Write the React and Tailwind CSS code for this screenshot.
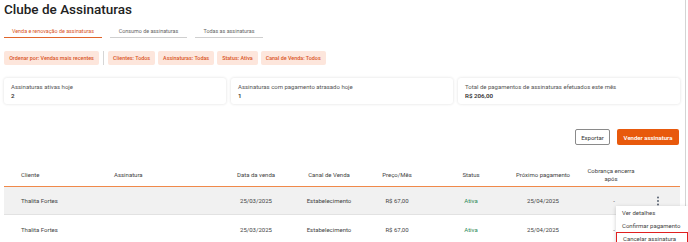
import { useState } from "react";

const filters = [
  "Clientes: Todos",
  "Assinaturas: Todas",
  "Status: Ativa",
  "Canal de Venda: Todos",
];

const cards = [
  { label: "Assinaturas ativas hoje", value: "2" },
  { label: "Assinaturas com pagamento atrasado hoje", value: "1" },
  { label: "Total de pagamentos de assinaturas efetuados este mês", value: "R$ 206,00" },
];

const rows = [
  { cliente: "Thalita Fortes", data: "25/03/2025", canal: "Estabelecimento", preco: "R$ 67,00", status: "Ativa", proximo: "25/04/2025", fim: "-" },
  { cliente: "Thalita Fortes", data: "25/03/2025", canal: "Estabelecimento", preco: "R$ 67,00", status: "Ativa", proximo: "25/04/2025", fim: "-" },
];

const Kebab = () => (
  <svg width="4" height="10" viewBox="0 0 4 10" className="text-gray-600">
    <circle cx="2" cy="1.5" r="0.9" fill="currentColor" />
    <circle cx="2" cy="5" r="0.9" fill="currentColor" />
    <circle cx="2" cy="8.5" r="0.9" fill="currentColor" />
  </svg>
);

const App = () => {
  const [tab] = useState(0);
  const tabs = [
    { label: "Venda e renovação de assinaturas", w: "w-[98px]" },
    { label: "Consumo de assinaturas", w: "w-[77px]" },
    { label: "Todas as assinaturas", w: "w-[68px]" },
  ];

  return (
    <div className="relative w-[688px] h-[242px] overflow-hidden bg-white font-['Roboto',sans-serif]">
      <div className="w-[686px] h-[242px] border-r border-[#d4d4d4] pl-[4px] pr-[5px]">
        {/* Title */}
        <h1 className="text-[13.5px] leading-[18px] font-medium text-[#222]">
          Clube de Assinaturas
        </h1>

        {/* Tabs */}
        <div className="flex gap-[8px] mt-[7px]">
          {tabs.map((t, i) => (
            <div
              key={t.label}
              className={`${t.w} h-[13px] pt-[3px] flex items-start justify-center text-[5.4px] leading-[7px] whitespace-nowrap ${
                i === tab
                  ? "text-[#d9541e] border-b-[1.5px] border-[#e0652b]"
                  : "text-[#666] border-b border-[#cfcfcf]"
              }`}
            >
              {t.label}
            </div>
          ))}
        </div>

        {/* Filter chips */}
        <div className="flex items-center mt-[13px] h-[14px]">
          <div className="w-[95px] h-[14px] flex items-center justify-center rounded-[2px] bg-[#fde6dc] text-[#d9541e] text-[5.4px] font-medium whitespace-nowrap">
            Ordenar por: Vendas mais recentes
          </div>
          <div className="w-px h-[14px] bg-[#d6d6d6] ml-[4px] mr-[4px]" />
          <div className="flex gap-[3px]">
            {filters.map((f) => (
              <div
                key={f}
                className="h-[14px] px-[5px] flex items-center rounded-[2px] bg-[#fde6dc] text-[#d9541e] text-[5.4px] font-medium whitespace-nowrap"
              >
                {f}
              </div>
            ))}
          </div>
        </div>

        {/* Summary cards */}
        <div className="flex gap-[5px] mt-[13px]">
          {cards.map((c) => (
            <div
              key={c.label}
              className="flex-1 h-[26px] rounded-[3px] bg-white shadow-[0_0_3px_rgba(0,0,0,0.14)] pl-[7px] pt-[5px]"
            >
              <div className="text-[6px] leading-[8px] text-[#555]">{c.label}</div>
              <div className="text-[6.2px] leading-[9px] font-semibold text-[#333] mt-[1px]">{c.value}</div>
            </div>
          ))}
        </div>

        {/* Actions */}
        <div className="flex justify-end gap-[7px] mt-[25px] pr-[1px]">
          <button className="w-[35px] h-[16px] rounded-[2px] border border-[#8a8a8a] bg-white text-[6px] text-[#333]">
            Exportar
          </button>
          <button className="w-[62px] h-[16px] rounded-[2px] bg-[#e8590c] text-[6px] font-semibold text-white">
            Vender assinatura
          </button>
        </div>

        {/* Table */}
        <div className="mt-[18px] text-[6px] text-[#444]">
          <div className="flex items-center h-[24px] text-[#444] border-b-[1.5px] border-[#f0894a]">
            <div className="w-[93px] pl-[17px]">Cliente</div>
            <div className="w-[123px] pl-[17px]">Assinatura</div>
            <div className="w-[72px] text-center">Data da venda</div>
            <div className="w-[74px] text-center">Canal de Venda</div>
            <div className="w-[62px] text-center">Preço/Mês</div>
            <div className="w-[86px] text-center">Status</div>
            <div className="w-[58px] text-center whitespace-nowrap">Próximo pagamento</div>
            <div className="w-[78px] text-center leading-[8px] px-[14px]">Cobrança encerra após</div>
            <div className="flex-1" />
          </div>
          {rows.map((r, i) => (
            <div
              key={i}
              className={`flex items-center h-[28px] ${
                i === 0 ? "bg-[#f1f1f1] border-b border-[#e2e2e2]" : "bg-white"
              }`}
            >
              <div className="w-[93px] pl-[17px]">{r.cliente}</div>
              <div className="w-[123px] pl-[17px]" />
              <div className="w-[72px] text-center">{r.data}</div>
              <div className="w-[74px] text-center">{r.canal}</div>
              <div className="w-[62px] text-center">{r.preco}</div>
              <div className="w-[86px] text-center text-[#2e8b57]">{r.status}</div>
              <div className="w-[58px] text-center">{r.proximo}</div>
              <div className="w-[78px] text-center pl-[6px]">{r.fim}</div>
              <div className="flex-1 flex pl-[6px]">{i === 0 && <Kebab />}</div>
            </div>
          ))}
        </div>
      </div>

      {/* Dropdown menu */}
      <div className="absolute left-[616px] top-[206px] w-[72px] bg-white shadow-[0_1px_4px_rgba(0,0,0,0.2)] text-[6px] text-[#444]">
        <div className="h-[13px] flex items-center pl-[6px]">Ver detalhes</div>
        <div className="h-[13px] flex items-center pl-[6px] whitespace-nowrap">Confirmar pagamento</div>
        <div className="h-[12px] flex items-center pl-[6px] border-[1.5px] border-[#e02020]">
          Cancelar assinatura
        </div>
      </div>
    </div>
  );
};

export default App;
